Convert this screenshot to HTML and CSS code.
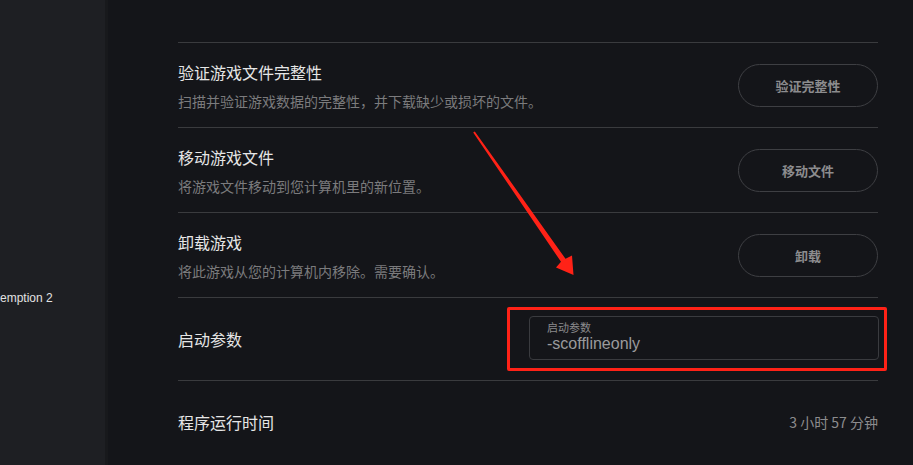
FILE: index.html
```html
<!DOCTYPE html>
<html lang="zh-CN">
<head>
    <meta charset="UTF-8">
    <meta name="viewport" content="width=device-width, initial-scale=1.0">
    <title>游戏属性</title>
    <link rel="stylesheet" href="styles.css">
</head>
<body>
    <div class="app">
        <div class="sidebar">
            <div class="game-name">emption 2</div>
        </div>
        <div class="main">
            <div class="settings">
                <div class="row">
                    <div class="info">
                        <div class="title">验证游戏文件完整性</div>
                        <div class="desc">扫描并验证游戏数据的完整性，并下载缺少或损坏的文件。</div>
                    </div>
                    <button class="pill">验证完整性</button>
                </div>
                <div class="row">
                    <div class="info">
                        <div class="title">移动游戏文件</div>
                        <div class="desc">将游戏文件移动到您计算机里的新位置。</div>
                    </div>
                    <button class="pill">移动文件</button>
                </div>
                <div class="row">
                    <div class="info">
                        <div class="title">卸载游戏</div>
                        <div class="desc">将此游戏从您的计算机内移除。需要确认。</div>
                    </div>
                    <button class="pill">卸载</button>
                </div>
                <div class="row row-args">
                    <div class="title">启动参数</div>
                    <div class="highlight">
                        <div class="field">
                            <div class="field-label">启动参数</div>
                            <div class="field-value">-scofflineonly</div>
                        </div>
                    </div>
                </div>
                <div class="row row-time">
                    <div class="title">程序运行时间</div>
                    <div class="time">3 小时 57 分钟</div>
                </div>
            </div>
        </div>
    </div>

    <!-- annotation arrow -->
    <svg class="arrow" width="913" height="465" viewBox="0 0 913 465">
        <polygon points="473.2,132.6 474.8,131.4 565.5,258.8 572,255.5 573.5,275 556,267.5 561,261.8" fill="#ff2217"/>
    </svg>
</body>
</html>
```

FILE: styles.css
```css
* {
    box-sizing: border-box;
}

body {
    margin: 0;
    padding: 0;
    height: 100vh;
    overflow: hidden;
    background: #141519;
    font-family: "Noto Sans CJK SC", "Liberation Sans", sans-serif;
}

.app {
    display: flex;
    height: 100%;
}

.sidebar {
    width: 108px;
    flex-shrink: 0;
    background: #1e1f23;
    border-right: 3px solid #18191c;
    padding-top: 289px;
    overflow: hidden;
}

.game-name {
    color: #e2e2e2;
    font-family: "Liberation Sans", sans-serif;
    font-size: 12px;
    line-height: 18px;
    white-space: nowrap;
}

.main {
    flex-grow: 1;
    padding: 42px 35px 0 70px;
}

.row {
    display: flex;
    align-items: center;
    justify-content: space-between;
    height: 85px;
    border-top: 1px solid #3a3b3e;
}

.info {
    padding-top: 2px;
}

.title {
    color: #e6e6e6;
    font-size: 16px;
    line-height: 22px;
}

.desc {
    margin-top: 8px;
    color: #7b7b7d;
    font-size: 14px;
    line-height: 20px;
}

.pill {
    width: 140px;
    height: 43px;
    background: transparent;
    border: 1px solid #3e3f43;
    border-radius: 22px;
    color: #8c8c8e;
    font-family: inherit;
    font-size: 13px;
    font-weight: bold;
    cursor: pointer;
}

.row-args {
    height: 83px;
}

.highlight {
    margin-right: -9px;
    padding: 6px 5px 8px 19px;
    border: 3px solid #ff2217;
    border-radius: 2px;
}

.field {
    width: 350px;
    height: 44px;
    border: 1px solid #3a3b3f;
    border-radius: 4px;
    padding: 4px 0 0 17px;
    background: #141519;
}

.field-label {
    color: #8a8a8c;
    font-size: 11px;
    line-height: 13px;
}

.field-value {
    color: #9a9a9c;
    font-family: "Liberation Sans", sans-serif;
    font-size: 16px;
    line-height: 19px;
}

.row-time {
    height: auto;
    padding-top: 30px;
}

.time {
    color: #8c8c8e;
    font-size: 14px;
    line-height: 22px;
}

.arrow {
    position: absolute;
    left: 0;
    top: 0;
    pointer-events: none;
}
```
